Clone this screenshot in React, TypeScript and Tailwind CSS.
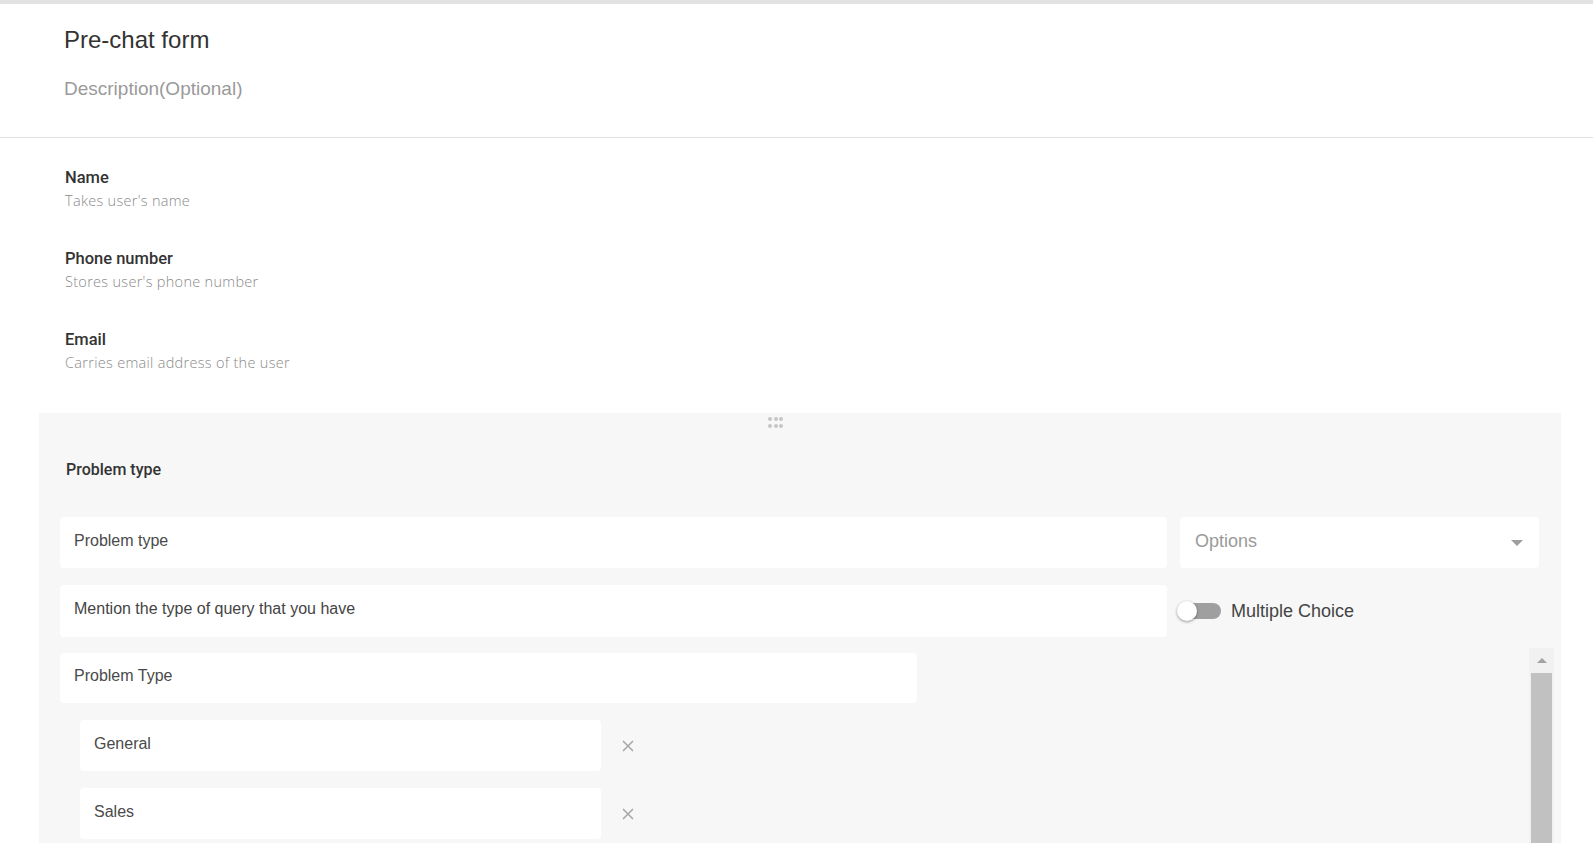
import { useState } from "react";

const fields = [
  { label: "Name", description: "Takes user's name" },
  { label: "Phone number", description: "Stores user's phone number" },
  { label: "Email", description: "Carries email address of the user" },
];

const choices = ["General", "Sales"];

const CloseIcon = () => (
  <svg width="12" height="12" viewBox="0 0 12 12" className="shrink-0">
    <path d="M1 1L11 11M11 1L1 11" stroke="#a6a6a6" strokeWidth="1.5" />
  </svg>
);

const DragHandle = () => (
  <div className="grid w-fit grid-cols-[4px_4px_4px] gap-x-[1.5px] gap-y-[3px]">
    {Array.from({ length: 6 }).map((_, i) => (
      <span key={i} className="h-[4px] w-[4px] rounded-full bg-[#c6c6c6]" />
    ))}
  </div>
);

const App = () => {
  const [multiple, setMultiple] = useState(false);

  return (
    <div className="h-screen overflow-hidden bg-white font-['Liberation_Sans',Arial,sans-serif]">
      <div className="h-1 bg-[#e2e2e2]" />

      <header className="border-b border-[#e0e0e0] pb-[37px] pl-16 pt-[22px]">
        <h1 className="text-[24px] leading-[28px] text-[#333]">Pre-chat form</h1>
        <p className="mt-[24px] text-[19px] leading-[22px] text-[#9a9a9a]">
          Description(Optional)
        </p>
      </header>

      <section className="flex flex-col gap-[39px] pb-[41px] pl-[65px] pt-[30px]">
        {fields.map((field) => (
          <div key={field.label}>
            <div className="font-[Roboto,sans-serif] text-[16.5px] font-medium leading-[20px] text-[#333]">
              {field.label}
            </div>
            <div className="mt-[4px] font-['Open_Sans',sans-serif] text-[14.5px] font-light leading-[18px] tracking-[0.3px] text-[#8a8a8a]">
              {field.description}
            </div>
          </div>
        ))}
      </section>

      <section className="ml-[39px] mr-[32px] bg-[#f7f7f7] pb-[60px] pt-[4px]">
        <div className="pl-[729px]">
          <DragHandle />
        </div>

        <div className="mt-[32px] pl-[27px] font-[Roboto,sans-serif] text-[16px] font-medium leading-[20px] text-[#333]">
          Problem type
        </div>

        <div className="mt-[37px] flex flex-col gap-[17px] pl-[21px] pr-[22px]">
          <div className="flex gap-[13px]">
            <div className="flex h-[51px] flex-1 items-center rounded bg-white pb-1 pl-[14px] text-[16px] text-[#4a4a4a]">
              Problem type
            </div>
            <div className="flex h-[51px] w-[359px] items-center justify-between rounded bg-white pl-[15px] pr-[16px]">
              <span className="pb-[2px] text-[18px] text-[#9a9a9a]">Options</span>
              <span className="h-0 w-0 border-x-[6px] border-t-[6px] border-x-transparent border-t-[#9e9e9e]" />
            </div>
          </div>

          <div className="flex gap-[13px]">
            <div className="flex h-[52px] flex-1 items-center rounded bg-white pb-1 pl-[14px] text-[16px] text-[#444]">
              Mention the type of query that you have
            </div>
            <div className="flex w-[359px] items-center">
              <button
                onClick={() => setMultiple(!multiple)}
                className="relative -ml-[3px] flex h-5 w-[44px] items-center"
              >
                <span className="ml-[4px] h-4 w-[40px] rounded-full bg-[#9f9f9f]" />
                <span className="absolute left-0 top-0 h-5 w-5 rounded-full bg-white shadow-[0_1px_3px_rgba(0,0,0,0.4)]" />
              </button>
              <span className="ml-[10px] text-[18px] text-[#444]">Multiple Choice</span>
            </div>
          </div>
        </div>

        <div className="mt-[11px] flex">
          <div className="flex flex-1 flex-col gap-[17px] pl-[21px] pt-[5px]">
            <div className="flex h-[50px] w-[857px] items-center rounded bg-white pb-1 pl-[14px] text-[16px] text-[#4a4a4a]">
              Problem Type
            </div>
            {choices.map((choice) => (
              <div key={choice} className="flex items-center pl-[20px]">
                <div className="flex h-[51px] w-[521px] items-center rounded bg-white pb-1 pl-[14px] text-[16px] text-[#4a4a4a]">
                  {choice}
                </div>
                <div className="ml-[21px]">
                  <CloseIcon />
                </div>
              </div>
            ))}
            <div className="flex items-center pl-[20px]">
              <div className="h-[51px] w-[521px] rounded bg-white" />
            </div>
          </div>

          <div className="mr-[7px] flex w-[25px] flex-col bg-[#f1f1f1]">
            <div className="flex h-[25px] items-center justify-center">
              <span className="h-0 w-0 border-x-[5px] border-b-[5px] border-x-transparent border-b-[#a3a3a3]" />
            </div>
            <div className="mx-[2px] h-[260px] bg-[#c1c1c1]" />
          </div>
        </div>
      </section>
    </div>
  );
};

export default App;
